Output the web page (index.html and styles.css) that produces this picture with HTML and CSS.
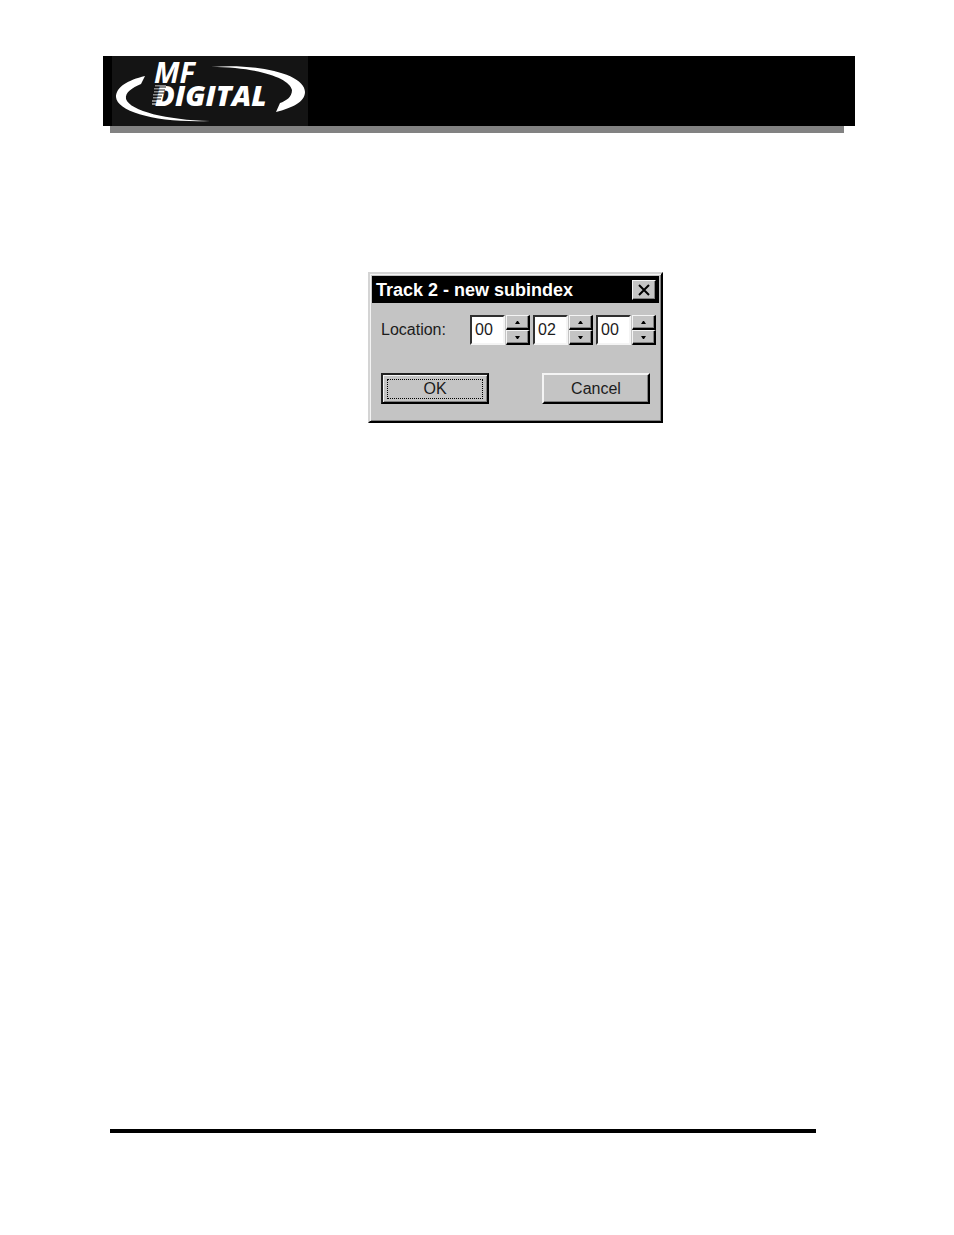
FILE: index.html
```html
<!DOCTYPE html>
<html lang="en">
<head>
    <meta charset="UTF-8">
    <meta name="viewport" content="width=device-width, initial-scale=1.0">
    <title>MF Digital - Track 2 new subindex</title>
    <link rel="stylesheet" href="styles.css">
</head>
<body>
    <header class="banner">
        <svg class="logo" viewBox="0 0 196 70" role="img" aria-label="MF Digital">
            <path d="M33 20 C16 24 4 31 4 41 C5 56 45 67 98 65 C55 64 18 55 14 43 C13 36 20 32 29 28 Z"/>
            <path d="M99 11 C145 7 193 18 193 36 C193 46 180 52 164 56 L168 47 C174 45 180 41 180 34 C178 22 145 11 99 11 Z"/>
            <text class="mf" x="42" y="27">MF</text>
            <path class="streaks" d="M43 30H54M42 33H53M42 36H52M41 39H50M41 42H50M40 45H49M40 48H50"/>
            <text class="digital" x="43" y="50">D<tspan x="63">IGITAL</tspan></text>
            <path class="stripes" d="M42 31H54M42 34H53M42 37H52M41 40H50M41 43H49"/>
        </svg>
    </header>

    <main>
        <form class="dialog" role="dialog" aria-labelledby="dialogTitle">
            <div class="title-bar">
                <h1 id="dialogTitle">Track 2 - new subindex</h1>
                <button type="button" class="close" aria-label="Close">
                    <svg viewBox="0 0 12 12"><path d="M1 1L11 11M11 1L1 11"/></svg>
                </button>
            </div>

            <div class="location">
                <label for="minutes">Location:</label>
                <div class="spin-box">
                    <input type="text" id="minutes" value="00">
                    <div class="arrows">
                        <button type="button" aria-label="Minutes up"><svg viewBox="0 0 5 3"><path d="M0 3L2 0H3L5 3Z"/></svg></button>
                        <button type="button" aria-label="Minutes down"><svg viewBox="0 0 5 3"><path d="M0 0L2 3H3L5 0Z"/></svg></button>
                    </div>
                </div>
                <div class="spin-box">
                    <input type="text" id="seconds" value="02" aria-label="Seconds">
                    <div class="arrows">
                        <button type="button" aria-label="Seconds up"><svg viewBox="0 0 5 3"><path d="M0 3L2 0H3L5 3Z"/></svg></button>
                        <button type="button" aria-label="Seconds down"><svg viewBox="0 0 5 3"><path d="M0 0L2 3H3L5 0Z"/></svg></button>
                    </div>
                </div>
                <div class="spin-box">
                    <input type="text" id="frames" value="00" aria-label="Frames">
                    <div class="arrows">
                        <button type="button" aria-label="Frames up"><svg viewBox="0 0 5 3"><path d="M0 3L2 0H3L5 3Z"/></svg></button>
                        <button type="button" aria-label="Frames down"><svg viewBox="0 0 5 3"><path d="M0 0L2 3H3L5 0Z"/></svg></button>
                    </div>
                </div>
            </div>

            <div class="button-group">
                <button type="submit" class="action default"><span>OK</span></button>
                <button type="button" class="action">Cancel</button>
            </div>
        </form>
    </main>

    <footer></footer>
</body>
</html>
```

FILE: styles.css
```css
:root {
    --face: #c4c4c4;
    --light: #f4f4f4;
    --shade: #808080;
    --dark: #000;
}

* { box-sizing: border-box; }

body {
    margin: 0;
    padding: 56px 0 102px;
    min-height: 100vh;
    display: flex;
    flex-direction: column;
    background: #fff;
    color: #1c1c1c;
    font-family: "Liberation Sans", Arial, sans-serif;
    font-size: 16px;
}

/* Banner with its offset grey shadow */
.banner {
    position: relative;
    margin: 0 99px 0 103px;
    padding-left: 9px;
    height: 70px;
    background: #000;
}
.banner::after {
    content: "";
    position: absolute;
    top: 100%; left: 7px; right: 11px;
    height: 7px;
    background: #828282;
}
.logo { display: block; width: 196px; height: 70px; background: #141414; fill: #fff; }
.logo text {
    font-family: "Open Sans", "Noto Sans", sans-serif;
    font-size: 29px; font-style: italic;
}
.logo .mf { font-weight: 700; }
.logo .digital { font-weight: 800; }
.stripes { stroke: #141414; stroke-width: 1; }
.streaks { stroke: #fff; stroke-width: 1; }

main {
    flex: 1;
    display: flex;
    justify-content: center;
    align-items: flex-start;
    padding: 146px 20px 0 97px;
}

.dialog {
    width: 295px;
    padding: 2px 2px 17px;
    background: var(--face);
    border: 2px solid;
    border-color: #d4d4d4 var(--dark) var(--dark) #d4d4d4;
    box-shadow: inset 1px 1px var(--light), inset -1px -1px var(--shade);
}

.title-bar {
    display: flex;
    align-items: center;
    justify-content: space-between;
    height: 27px;
    padding: 0 3px 0 4px;
    background: #000;
    color: #fff;
}
.title-bar h1 { margin: 0; font-size: 18px; line-height: 20px; }

button {
    padding: 0;
    background: var(--face);
    color: inherit;
    font: inherit;
    border: 1px solid;
    border-color: var(--light) var(--dark) var(--dark) var(--light);
    box-shadow: inset -1px -1px var(--shade);
}

.close { display: grid; place-items: center; width: 24px; height: 20px; }
.close svg { width: 12px; height: 12px; stroke: #000; stroke-width: 2; }

.location {
    display: flex;
    align-items: center;
    gap: 3px;
    margin-top: 12px;
    padding: 0 3px 0 9px;
}
.location label { flex: 1; }

.spin-box { display: flex; gap: 1px; height: 30px; }
.spin-box input {
    width: 35px;
    padding: 0 0 0 3px;
    font: inherit;
    color: inherit;
    background: #fff;
    border: 2px solid;
    border-color: #303030 var(--light) var(--light) #303030;
    border-radius: 0;
    outline: none;
}
.arrows { display: flex; flex-direction: column; width: 24px; }
.arrows button {
    flex: 1;
    display: grid;
    place-items: center;
    border-width: 1px 2px 2px 1px;
}
.arrows svg { width: 5px; height: 3px; fill: #000; }

.button-group {
    display: flex;
    justify-content: space-between;
    margin-top: 28px;
    padding: 0 9px;
}
.action {
    width: 108px;
    height: 31px;
    border-width: 2px;
}
.default {
    padding: 2px;
    border-color: #202020 var(--dark) var(--dark) #202020;
    box-shadow: inset 1px 1px var(--light), inset -1px -1px var(--shade);
}
.default span {
    display: block;
    margin: 0 2px;
    border: 1px dotted #000;
    line-height: 18px;
}

footer { margin: 0 138px 0 110px; height: 4px; background: #000; }
```
